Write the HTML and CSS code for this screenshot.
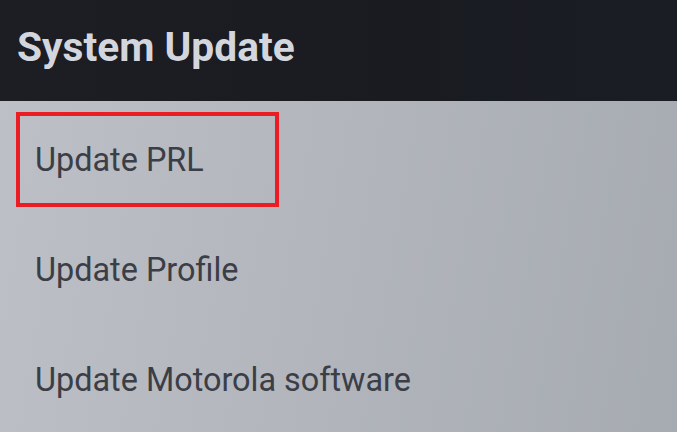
FILE: index.html
```html
<!DOCTYPE html>
<html>
<head>
<meta charset="utf-8">
<link rel="stylesheet" href="styles.css">
</head>
<body>
<div class="screen">
  <header class="appbar"><h1 class="title">System Update</h1></header>
  <ul class="list">
    <li class="item selected"><span>Update PRL</span></li>
    <li class="item"><span>Update Profile</span></li>
    <li class="item"><span>Update Motorola software</span></li>
  </ul>
</div>
</body>
</html>
```
FILE: styles.css
```css
html, body { margin: 0; padding: 0; }
body {
  width: 677px; height: 432px; overflow: hidden;
  font-family: Roboto, "Liberation Sans", sans-serif;
}
.screen {
  width: 677px; height: 432px;
  display: flex; flex-direction: column;
  background: linear-gradient(100deg, #bdc0c6 0%, #b2b5bc 50%, #a6aab1 100%);
}
.appbar {
  height: 101px; flex: none;
  background: linear-gradient(90deg, #1c1e24 0%, #191b21 60%, #1b1d25 100%);
  display: flex; align-items: flex-start;
  padding-left: 17px; box-sizing: border-box;
}
.title {
  margin: 20px 0 0 0;
  font-size: 40.7px; font-weight: 700; line-height: 54px;
  color: #d4d6de;
}
.list { list-style: none; margin: 0; padding: 11px 0 0 16px; display: flex; flex-direction: column; gap: 15px; }
.item {
  height: 95px; box-sizing: border-box;
  display: flex; align-items: center;
  padding-left: 15px;
  font-size: 32.4px; color: #3b3e46;
  border: 4px solid transparent;
  width: 263px;
}
.item span { white-space: nowrap; }
.item.selected { border-color: #ec1c24; }
```
